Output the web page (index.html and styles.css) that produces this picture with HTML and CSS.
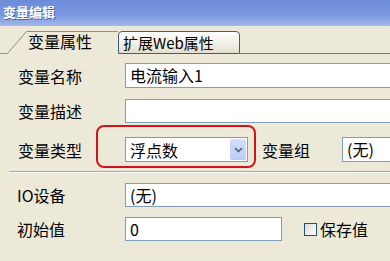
FILE: index.html
```html
<!DOCTYPE html>
<html lang="zh-CN">
<head>
  <meta charset="UTF-8" />
  <title>变量编辑</title>
  <link rel="stylesheet" href="styles.css">
</head>
<body>
  <div class="titlebar">变量编辑</div>

  <div class="tabs">
    <div class="tab tab-active">
      <svg class="tab-shape" width="120" height="23" viewBox="0 0 120 23">
        <path d="M0 22.5 H7.5 L26.5 0.5 H118" fill="none" stroke="#8f8f88" />
      </svg>
      <span class="tab-label">变量属性</span>
    </div>
    <div class="tab tab-other">扩展Web属性</div>
    <div class="tab-rest"></div>
  </div>

  <div class="panel">
    <div class="row row-name">
      <span class="lbl">变量名称</span>
      <div class="field wide">电流输入1</div>
    </div>
    <div class="row row-desc">
      <span class="lbl">变量描述</span>
      <div class="field wide"></div>
    </div>
    <div class="row row-type">
      <span class="lbl">变量类型</span>
      <div class="hl">
        <div class="select">
          <span class="select-text">浮点数</span>
          <span class="select-btn">
            <svg width="9" height="6" viewBox="0 0 9 6">
              <path d="M1 1 L4.5 4.5 L8 1" fill="none" stroke="#4d6185" stroke-width="1.6" />
            </svg>
          </span>
        </div>
      </div>
      <span class="lbl-group">变量组</span>
      <div class="field wide">(无)</div>
    </div>

    <div class="sep"></div>

    <div class="row row-io">
      <span class="lbl">IO设备</span>
      <div class="field wide">(无)</div>
    </div>
    <div class="row row-init">
      <span class="lbl">初始值</span>
      <div class="field init">0</div>
      <label class="check"><span class="box"></span>保存值</label>
    </div>
  </div>
</body>
</html>
```

FILE: styles.css
```css
body {
  margin: 0;
  width: 390px;
  height: 261px;
  overflow: hidden;
  background-color: #ece9d8;
  font-family: "Noto Sans CJK SC", "Liberation Sans", sans-serif;
  font-size: 15px;
  color: #000;
}

.titlebar {
  height: 26px;
  line-height: 24px;
  padding-left: 3px;
  background: linear-gradient(#6c8cda, #7d9ae0 60%, #a3b8ea);
  color: #fff;
  font-weight: bold;
  font-size: 13px;
  text-shadow: 1px 1px 0 #4a62a8;
}

/* tab strip */
.tabs {
  display: flex;
  align-items: flex-end;
  height: 28px;
  width: 420px;
}
.tab {
  box-sizing: border-box;
  height: 23px;
}
.tab-active {
  position: relative;
  width: 118px;
  flex: none;
}
.tab-shape {
  position: absolute;
  left: 0;
  top: 0;
}
.tab-label {
  position: relative;
  display: block;
  padding-left: 28px;
  line-height: 21px;
  font-size: 16px;
}
.tab-other {
  width: 122px;
  flex: none;
  border: 1px solid #3f5b8c;
  border-radius: 4px 4px 0 0;
  background: linear-gradient(#ffffff, #f3f1e8 50%, #e2dfd0);
  padding-left: 4px;
  line-height: 21px;
  font-size: 15px;
}
.tab-rest {
  flex: 1;
  border-bottom: 1px solid #5c7aa6;
}

/* form rows */
.panel {
  width: 420px;
  padding-top: 9px;
}
.row {
  display: flex;
  align-items: center;
}
.row-desc {
  margin-top: 11px;
}
.row-type {
  margin-top: 14px;
}
.row-init {
  margin-top: 10px;
}
.lbl {
  width: 107px;
  padding-left: 18px;
  flex: none;
  font-size: 16px;
}
.row-io .lbl,
.row-init .lbl {
  padding-left: 17px;
  width: 108px;
}
.field {
  box-sizing: border-box;
  height: 25px;
  border: 1px solid #7f9db9;
  background: #fff;
  padding-left: 4px;
  line-height: 23px;
  font-size: 16px;
}
.wide {
  flex: 1;
}
.field.init {
  width: 157px;
  height: 24px;
  line-height: 22px;
}
.row-desc .field,
.row-io .field {
  height: 24px;
}

/* highlighted select */
.hl {
  position: relative;
}
.hl::after {
  content: "";
  position: absolute;
  left: -29px;
  top: -12px;
  right: -8px;
  bottom: -6px;
  border: 2px solid #d4141c;
  border-radius: 8px;
}
.select {
  box-sizing: border-box;
  display: flex;
  align-items: center;
  width: 123px;
  height: 25px;
  border: 1px solid #7f9db9;
  background: #fff;
  padding: 1px;
}
.select-text {
  flex: 1;
  padding-left: 3px;
  font-size: 16px;
}
.select-btn {
  display: flex;
  align-items: center;
  justify-content: center;
  width: 16px;
  height: 21px;
  border-radius: 2px;
  background: linear-gradient(#d4e0fd, #b9cbf6);
}
.lbl-group {
  margin-left: 14px;
  width: 80px;
  font-size: 16px;
}

.sep {
  margin: 9px 0 10px 9px;
  border-top: 1px solid #aca899;
  border-bottom: 1px solid #fff;
}

.check {
  display: flex;
  align-items: center;
  margin-left: 22px;
  font-size: 16px;
}
.box {
  box-sizing: border-box;
  width: 13px;
  height: 13px;
  margin-right: 3px;
  border: 1px solid #1c5180;
  background: linear-gradient(135deg, #dcdcd7, #fff);
}
```
